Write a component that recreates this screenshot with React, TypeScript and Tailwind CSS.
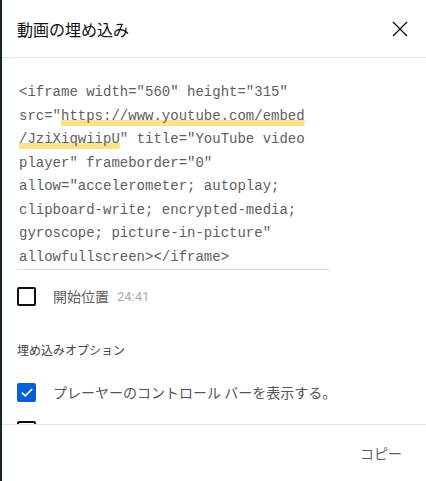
import { Check } from "lucide-react";

const jp = "font-['Noto_Sans_CJK_JP','Noto_Sans',sans-serif]";
const mark =
  "underline decoration-[#fbe38c] decoration-[6px] underline-offset-[0px] [text-decoration-skip-ink:none]";

const codeLines: React.ReactNode[] = [
  <>{'<iframe width="560" height="315"'}</>,
  <>
    {'src="'}
    <span className={mark}>https://www.youtube.com/embed</span>
  </>,
  <>
    <span className={mark}>/JziXiqwiipU</span>
    {'" title="YouTube video'}
  </>,
  <>{'player" frameborder="0"'}</>,
  <>{'allow="accelerometer; autoplay;'}</>,
  <>{"clipboard-write; encrypted-media;"}</>,
  <>{'gyroscope; picture-in-picture"'}</>,
  <>{"allowfullscreen></iframe>"}</>,
];

function Box({ checked }: { checked?: boolean }) {
  if (checked) {
    return (
      <div className="flex h-[19px] w-[19px] shrink-0 items-center justify-center rounded-[2px] bg-[#065fd4]">
        <Check className="h-[14px] w-[14px] text-white" strokeWidth={3} />
      </div>
    );
  }
  return <div className="h-[19px] w-[19px] shrink-0 rounded-[2px] border-2 border-[#0f0f0f]" />;
}

export default function App() {
  return (
    <div className={`flex h-[481px] w-[426px] flex-col border-l-2 border-[#1a2626] bg-white ${jp}`}>
      {/* header */}
      <div className="flex h-[58px] shrink-0 items-center justify-between border-b border-[#e5e5e5] pl-[15px] pr-[18px]">
        <h1 className="text-[16px] text-[#0f0f0f]">動画の埋め込み</h1>
        <svg width="16" height="16" viewBox="0 0 16 16" className="text-[#0f0f0f]">
          <path d="M1 1L15 15M15 1L1 15" stroke="currentColor" strokeWidth="1.3" fill="none" />
        </svg>
      </div>

      {/* body */}
      <div className="flex-1 overflow-hidden pl-[15px] pt-[23px]">
        <div className="w-[313px] border-b border-[#e0e0e0] pl-[2px] font-['Liberation_Mono',monospace] text-[14px] leading-[23.5px] text-[#606060]">
          {codeLines.map((l, i) => (
            <div key={i} className="whitespace-pre">
              {l}
            </div>
          ))}
        </div>

        <div className="mt-[16px] flex items-center gap-[17px]">
          <Box />
          <span className="text-[14px] text-[#606060]">開始位置</span>
          <span className="-ml-[9px] font-['Roboto',sans-serif] text-[13px] text-[#aaaaaa]">24:41</span>
        </div>

        <div className="mt-[35px] text-[12px] leading-[16px] text-[#444]">埋め込みオプション</div>

        <div className="mt-[24px] flex flex-col gap-[17px]">
          <div className="flex items-center gap-[17px]">
            <Box checked />
            <span className="text-[14px] text-[#555]">プレーヤーのコントロール バーを表示する。</span>
          </div>
          <div className="flex items-center gap-[17px]">
            <Box />
            <span className="text-[14px] text-[#555]">プライバシー強化モードを有効にする。</span>
            <svg width="16" height="16" viewBox="0 0 24 24" className="-ml-[6px] text-[#606060]">
              <circle cx="12" cy="12" r="10" fill="currentColor" />
              <text x="12" y="17" textAnchor="middle" fontSize="14" fill="white" fontFamily="Roboto">?</text>
            </svg>
          </div>
        </div>
      </div>

      {/* footer */}
      <div className="flex h-[57px] shrink-0 items-center justify-end border-t border-[#e5e5e5] pr-[24px]">
        <span className="text-[14px] text-[#606060]">コピー</span>
      </div>
    </div>
  );
}
